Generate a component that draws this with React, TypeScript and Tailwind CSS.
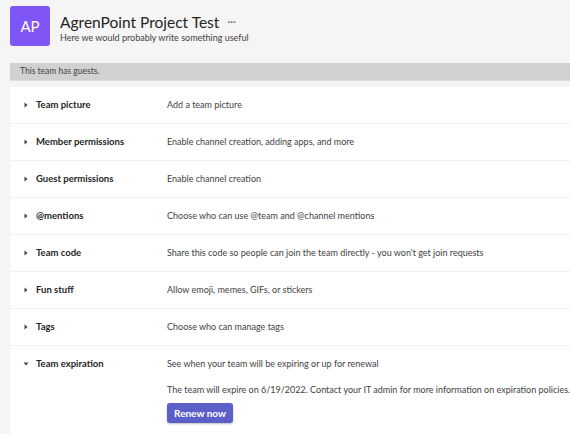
const rows = [
  { title: "Team picture", text: "Add a team picture" },
  { title: "Member permissions", text: "Enable channel creation, adding apps, and more" },
  { title: "Guest permissions", text: "Enable channel creation" },
  { title: "@mentions", text: "Choose who can use @team and @channel mentions" },
  { title: "Team code", text: "Share this code so people can join the team directly - you won't get join requests" },
  { title: "Fun stuff", text: "Allow emoji, memes, GIFs, or stickers" },
  { title: "Tags", text: "Choose who can manage tags" },
];

function Caret({ open }: { open?: boolean }) {
  return (
    <svg width="6" height="6" viewBox="0 0 6 6" className="shrink-0 text-[#424242]">
      {open ? <path d="M0.5 1.5 L5.5 1.5 L3 4.5 Z" fill="currentColor" /> : <path d="M1.5 0.5 L4.5 3 L1.5 5.5 Z" fill="currentColor" />}
    </svg>
  );
}

export default function App() {
  return (
    <div className="w-[570px] h-[434px] overflow-hidden bg-[#f5f5f5] text-[#242424]" style={{ fontFamily: 'Lato, "Open Sans", sans-serif' }}>
      <div className="flex items-start gap-[10px] pl-[10px] pt-[6px] h-[63px]">
        <div className="w-[40px] h-[40px] rounded-[3px] bg-[#7f56f5] flex items-center justify-center text-white text-[15px]">AP</div>
        <div className="pt-[6px]">
          <div className="flex items-center gap-[8px]">
            <span className="text-[15.5px] leading-[20px]">AgrenPoint Project Test</span>
            <span className="text-[11px] leading-[12px] text-[#616161]">···</span>
          </div>
          <div className="text-[9px] leading-[11px] text-[#424242]">Here we would probably write something useful</div>
        </div>
      </div>
      <div className="ml-[10px] h-[18px] bg-[#d1d1d1] border-b border-dotted border-[#e6e6e6] flex items-center pl-[10px] text-[8.5px] text-[#424242]">This team has guests.</div>
      <div className="ml-[10px] mt-[6px] bg-white">
        {rows.map((r) => (
          <div key={r.title} className="h-[37px] flex items-center border-b border-[#f0f0f0]">
            <div className="w-[157px] shrink-0 flex items-center pl-[13px] gap-[7px]">
              <Caret />
              <span className="text-[9.5px] font-bold">{r.title}</span>
            </div>
            <span className="text-[9px] text-[#424242] whitespace-nowrap">{r.text}</span>
          </div>
        ))}
        <div className="h-[90px] flex items-start pt-[10px]">
          <div className="w-[157px] shrink-0 flex items-center pl-[13px] gap-[7px] h-[16px]">
            <Caret open />
            <span className="text-[9.5px] font-bold">Team expiration</span>
          </div>
          <div className="text-[9px] text-[#424242]">
            <div className="h-[16px] flex items-center whitespace-nowrap">See when your team will be expiring or up for renewal</div>
            <div className="h-[16px] flex items-center mt-[10px] whitespace-nowrap">The team will expire on 6/19/2022. Contact your IT admin for more information on expiration policies.</div>
            <button className="mt-[5px] w-[66px] h-[20px] rounded-[3px] bg-[#5b5fc7] text-white text-[10px] font-bold shadow-[0_1px_2px_rgba(0,0,0,0.25)]">Renew now</button>
          </div>
        </div>
      </div>
    </div>
  );
}
